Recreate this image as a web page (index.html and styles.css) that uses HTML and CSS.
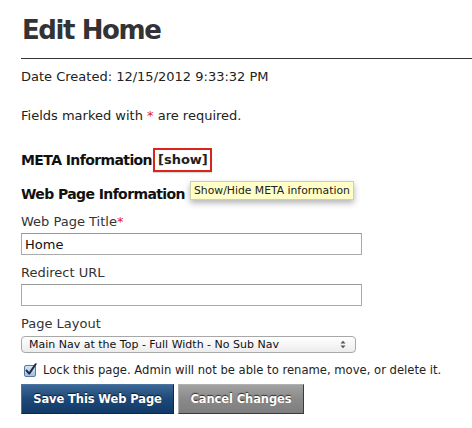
FILE: index.html
```html
<!DOCTYPE html>
<html>
<head>
<meta charset="utf-8">
<link rel="stylesheet" href="styles.css">
</head>
<body>
<div class="page">
  <h1 class="title">Edit Home</h1>
  <hr class="rule">
  <p class="meta-date">Date Created: 12/15/2012 9:33:32 PM</p>
  <p class="note">Fields marked with <span class="req">*</span> are required.</p>

  <h2 class="section section-meta">META Information <a class="toggle" href="#">[show]</a></h2>

  <div class="section-wrap">
    <h2 class="section">Web Page Information</h2>
    <div class="tooltip">Show/Hide META information</div>
  </div>

  <label class="field-label first">Web Page Title<span class="req">*</span></label>
  <input class="text-input" type="text" value="Home">

  <label class="field-label">Redirect URL</label>
  <input class="text-input" type="text" value="">

  <label class="field-label">Page Layout</label>
  <div class="select-wrap">
    <select class="select">
      <option>Main Nav at the Top - Full Width - No Sub Nav</option>
    </select>
    <svg class="select-arrows" width="6" height="9" viewBox="0 0 6 9"><path d="M0.5 3.5 L3 0.8 L5.5 3.5 Z M0.5 5.5 L3 8.2 L5.5 5.5 Z" fill="#555"/></svg>
  </div>

  <div class="check-row">
    <svg class="checkbox" width="14" height="14" viewBox="0 0 14 14">
      <defs>
        <linearGradient id="cb" x1="0" y1="0" x2="0" y2="1">
          <stop offset="0" stop-color="#d6e4f5"/>
          <stop offset="1" stop-color="#9fbde0"/>
        </linearGradient>
      </defs>
      <rect x="1.5" y="2.5" width="11" height="11" rx="1.5" fill="url(#cb)" stroke="#5a79a0"/>
      <path d="M3.6 7.6 L6.2 10.6 L12.6 1.2" fill="none" stroke="#1c2a44" stroke-width="2" stroke-linecap="round" stroke-linejoin="round"/>
    </svg>
    <span class="check-text">Lock this page. Admin will not be able to rename, move, or delete it.</span>
  </div>

  <div class="actions">
    <button class="btn btn-save">Save This Web Page</button>
    <button class="btn btn-cancel">Cancel Changes</button>
  </div>
</div>
</body>
</html>
```
FILE: styles.css
```css
html, body {
  margin: 0;
  padding: 0;
  background: #ffffff;
}
body {
  font-family: "DejaVu Sans", Verdana, sans-serif;
  color: #222;
}
.page {
  padding: 0 0 0 21px;
  display: flex;
  flex-direction: column;
  align-items: flex-start;
}
.title {
  font-family: "DejaVu Sans", sans-serif;
  font-weight: bold;
  font-size: 26px;
  letter-spacing: -1.4px;
  color: #333;
  margin: 15px 0 0 1px;
  line-height: 30px;
}
.rule {
  align-self: stretch;
  border: 0;
  border-top: 1px solid #333;
  margin: 13px 0 0 0;
  height: 0;
}
.meta-date {
  font-size: 13px;
  margin: 10px 0 0 0;
  line-height: 16px;
  color: #222;
}
.note {
  font-size: 13px;
  margin: 23px 0 0 0;
  line-height: 16px;
  color: #222;
}
.req {
  color: #e0251b;
}
.section {
  font-size: 14px;
  font-weight: bold;
  letter-spacing: -0.6px;
  color: #111;
  margin: 0;
  line-height: 18px;
}
.section-meta {
  display: flex;
  align-items: center;
  gap: 0;
  margin-top: 24px;
}
.toggle {
  display: block;
  color: #222;
  text-decoration: none;
  font-size: 13px;
  letter-spacing: 0;
  border: 2px solid #d9251c;
  padding: 2px 2px 2px 3px;
  margin-left: 1px;
  line-height: 16px;
  box-shadow: 0 1px 1px rgba(0,0,0,0.15);
}
.section-wrap {
  position: relative;
  margin-top: 13px;
}
.tooltip {
  position: absolute;
  left: 169px;
  top: -4px;
  white-space: nowrap;
  background: #ffffc7;
  border: 1px solid #d0d0b0;
  font-size: 10.8px;
  line-height: 17px;
  padding: 0 3px;
  color: #222;
  box-shadow: 0 3px 6px rgba(0,0,0,0.3);
}
.field-label {
  font-size: 13px;
  color: #333;
  line-height: 16px;
  margin-top: 10px;
}
.field-label.first {
  margin-top: 11px;
}
.text-input {
  box-sizing: border-box;
  width: 341px;
  height: 22px;
  margin: 3px 0 0 0;
  border: 1px solid #aaa;
  border-top-color: #999;
  padding: 1px 3px 0 3px;
  font-family: "DejaVu Sans", sans-serif;
  font-size: 13px;
  color: #111;
  outline: none;
}
.select-wrap {
  position: relative;
  margin-top: 4px;
}
.select {
  appearance: none;
  -webkit-appearance: none;
  box-sizing: border-box;
  width: 335px;
  height: 17px;
  border: 1px solid #a8a8a8;
  border-radius: 4px;
  background: linear-gradient(#ffffff, #ececec);
  font-family: "DejaVu Sans", sans-serif;
  font-size: 11px;
  color: #111;
  padding: 0 0 0 7px;
  line-height: 15px;
  display: block;
}
.select-arrows {
  position: absolute;
  right: 10px;
  top: 4px;
}
.check-row {
  display: flex;
  align-items: center;
  margin-top: 9px;
  margin-left: 2px;
}
.checkbox {
  display: block;
  margin-right: 6px;
}
.check-text {
  font-size: 11.6px;
  color: #222;
  line-height: 16px;
}
.actions {
  display: flex;
  gap: 4px;
  margin-top: 6px;
}
.btn {
  font-family: "DejaVu Sans", sans-serif;
  font-weight: bold;
  font-size: 11.5px;
  letter-spacing: -0.1px;
  white-space: nowrap;
  color: #fff;
  text-shadow: 0 -1px 1px rgba(0,0,0,0.7);
  height: 30px;
  padding: 0;
  border: 1px solid;
  cursor: pointer;
}
.btn-save {
  width: 153px;
  background: linear-gradient(#3d6895, #1d4878 50%, #123a68);
  border-color: #4a74a0 #0c2a4c #0c2a4c #4a74a0;
}
.btn-cancel {
  width: 126px;
  background: linear-gradient(#a2a2a2, #8a8a8a 50%, #7e7e7e);
  border-color: #b0b0b0 #3a3a3a #3a3a3a #b0b0b0;
}
```
